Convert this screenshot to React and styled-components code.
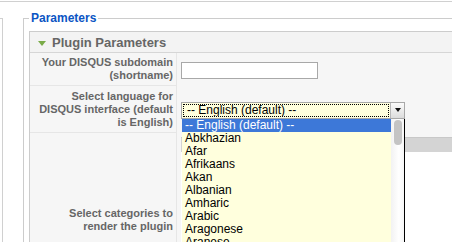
import styled, { createGlobalStyle } from "styled-components";

const GlobalStyle = createGlobalStyle`
  html, body {
    margin: 0;
    padding: 0;
    background: #ffffff;
  }
  body {
    font-family: "Liberation Sans", Arial, sans-serif;
    width: 452px;
    height: 242px;
    overflow: hidden;
  }
`;

const languages = [
  "Abkhazian",
  "Afar",
  "Afrikaans",
  "Akan",
  "Albanian",
  "Amharic",
  "Arabic",
  "Aragonese",
  "Aranese",
  "Armenian",
];

const Page = styled.div`
  margin-top: 1px;
  border-top: 1px solid #d0d0d0;
  display: flex;
  align-items: flex-start;
  height: 240px;
  overflow: hidden;
`;

const SideBox = styled.div`
  flex: none;
  width: 2px;
  height: 300px;
  margin-top: 16px;
  border-top: 1px solid #d0d0d0;
  border-right: 1px solid #d0d0d0;
`;

const Fieldset = styled.fieldset`
  flex: none;
  width: 620px;
  margin: 9px 0 0 20px;
  padding: 6px 0 0 5px;
  border: 1px solid #cccccc;
  min-inline-size: 0;
`;

const Legend = styled.legend`
  margin-left: 0;
  padding: 0 2px;
  font-size: 12px;
  line-height: 14px;
  font-weight: bold;
  color: #0b55c4;
`;

const Panel = styled.div`
  border: 1px solid #cccccc;
  background: #f6f6f6;
`;

const PanelHeader = styled.div`
  height: 20px;
  display: flex;
  align-items: center;
  gap: 6px;
  padding-left: 8px;
  background: #f3f3f3;
  border-bottom: 1px solid #d6d6d6;
  font-size: 13px;
  font-weight: bold;
  color: #666666;
`;

const Arrow = styled.span`
  width: 0;
  height: 0;
  margin-top: 2px;
  border-left: 4px solid transparent;
  border-right: 4px solid transparent;
  border-top: 5px solid #7aab48;
`;

const ParamTable = styled.div`
  display: grid;
  grid-template-columns: 147px 1fr;
`;

const Key = styled.div`
  display: flex;
  align-items: center;
  justify-content: flex-end;
  text-align: right;
  height: ${(p) => p.$h}px;
  padding-right: 3px;
  border-right: 1px solid #e6e6e6;
  border-bottom: 1px solid #e6e6e6;
  font-size: 11px;
  line-height: 13px;
  font-weight: bold;
  color: #666666;
`;

const Value = styled.div`
  display: flex;
  align-items: ${(p) => (p.$top ? "flex-start" : "center")};
  padding: ${(p) => (p.$top ? "4px 0 0 4px" : "0 0 0 4px")};
  height: ${(p) => p.$h}px;
  box-sizing: border-box;
`;

const TextInput = styled.input`
  width: 137px;
  height: 17px;
  box-sizing: border-box;
  margin: 1px 0 0;
  border: 1px solid #a8a8a8;
  background: #ffffff;
  padding: 0 2px;
`;

const SelectWrap = styled.div`
  position: relative;
  margin-top: 1px;
`;

const SelectBox = styled.div`
  width: 224px;
  height: 17px;
  box-sizing: border-box;
  display: flex;
  border: 1px solid #a8a8a8;
  background: #ffffdd;
`;

const SelectText = styled.div`
  flex: 1;
  margin: 1px;
  border: 1px dotted #000000;
  padding-left: 3px;
  font-size: 12px;
  line-height: 11px;
  color: #000000;
  white-space: nowrap;
  overflow: hidden;
`;

const SelectButton = styled.div`
  width: 13px;
  display: flex;
  align-items: center;
  justify-content: center;
  border-left: 1px solid #b8b8b8;
  background: linear-gradient(#fbfbfb, #dcdcdc);
  &::after {
    content: "";
    border-left: 3px solid transparent;
    border-right: 3px solid transparent;
    border-top: 4px solid #111111;
  }
`;

const DropList = styled.div`
  position: absolute;
  top: 17px;
  left: 1px;
  width: 223px;
  height: 140px;
  box-sizing: border-box;
  display: flex;
  border-right: 1px solid #000000;
  background: #ffffdd;
  z-index: 5;
`;

const Options = styled.div`
  flex: 1;
  display: flex;
  flex-direction: column;
`;

const Option = styled.div`
  height: 13px;
  padding-left: 3px;
  font-size: 12px;
  line-height: 13px;
  white-space: nowrap;
  color: ${(p) => (p.$selected ? "#ffffff" : "#000000")};
  background: ${(p) => (p.$selected ? "#3d78d8" : "transparent")};
`;

const ScrollTrack = styled.div`
  width: 13px;
  background: linear-gradient(to right, #f2f2f2, #ffffff 60%, #f6f6f6);
  padding: 1px 0 0 3px;
  box-sizing: border-box;
`;

const ScrollThumb = styled.div`
  width: 8px;
  height: 25px;
  border-radius: 4px;
  background: #c4c4c4;
`;

const CategoryBox = styled.div`
  width: 300px;
  height: 160px;
  border-top: 1px solid #c8c8c8;
  background: #ffffff;
  &::before {
    content: "";
    display: block;
    height: 14px;
    background: #d4d4d4;
  }
`;

export default function App() {
  return (
    <>
      <GlobalStyle />
      <Page>
        <SideBox />
        <Fieldset>
          <Legend>Parameters</Legend>
          <Panel>
            <PanelHeader>
              <Arrow />
              Plugin Parameters
            </PanelHeader>
            <ParamTable>
              <Key $h={32}>
                Your DISQUS subdomain
                <br />
                (shortname)
              </Key>
              <Value $h={33}>
                <TextInput type="text" />
              </Value>

              <Key $h={46}>
                Select language for
                <br />
                DISQUS interface (default
                <br />
                is English)
              </Key>
              <Value $h={47}>
                <SelectWrap>
                  <SelectBox>
                    <SelectText>-- English (default) --</SelectText>
                    <SelectButton />
                  </SelectBox>
                  <DropList>
                    <Options>
                      <Option $selected>-- English (default) --</Option>
                      {languages.map((l) => (
                        <Option key={l}>{l}</Option>
                      ))}
                    </Options>
                    <ScrollTrack>
                      <ScrollThumb />
                    </ScrollTrack>
                  </DropList>
                </SelectWrap>
              </Value>

              <Key $h={174}>
                Select categories to
                <br />
                render the plugin
              </Key>
              <Value $h={175} $top>
                <CategoryBox />
              </Value>
            </ParamTable>
          </Panel>
        </Fieldset>
      </Page>
    </>
  );
}
